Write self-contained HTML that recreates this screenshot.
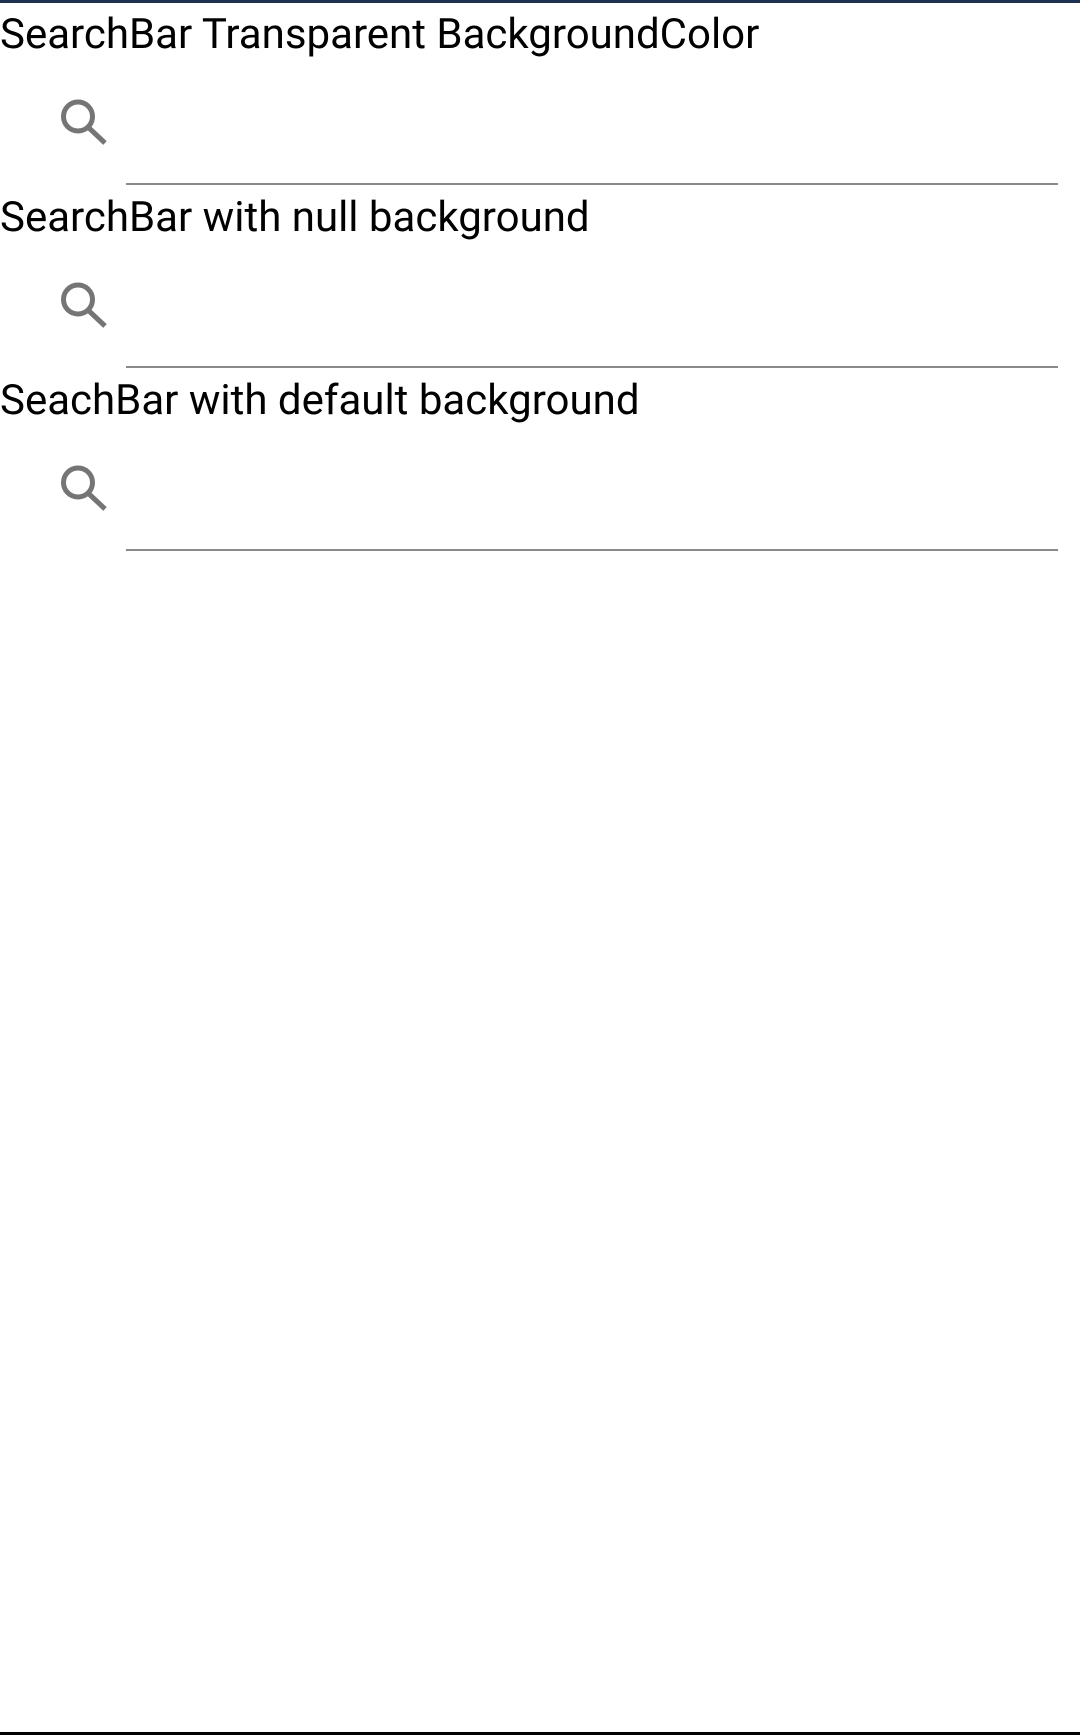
<!DOCTYPE html>
<html><head><style>
html,body{margin:0;padding:0;width:1080px;height:1735px;background:#fff;overflow:hidden;position:relative;font-family:"Roboto","Liberation Sans",sans-serif;}
.top{position:absolute;left:0;top:0;width:1080px;height:3px;background:#1d3250;}
.bot{position:absolute;left:0;top:1732px;width:1080px;height:3px;background:#000;}
.t{position:absolute;left:0;font-size:42px;color:#000;line-height:1;white-space:nowrap;}
.u{position:absolute;left:126px;width:932px;height:2px;background:#8a8a8a;}
svg{position:absolute;left:0;}
</style></head><body>
<div class="top"></div>
<div class="t" style="top:14px">SearchBar Transparent BackgroundColor</div>
<svg style="top:0" width="140" height="183"><circle cx="78" cy="116.5" r="14.5" fill="none" stroke="#757575" stroke-width="5"/><line x1="88" y1="127" x2="105" y2="143" stroke="#757575" stroke-width="5"/></svg>
<div class="u" style="top:183px"></div>
<div class="t" style="top:197px">SearchBar with null background</div>
<svg style="top:183px" width="140" height="183"><circle cx="78" cy="116.5" r="14.5" fill="none" stroke="#757575" stroke-width="5"/><line x1="88" y1="127" x2="105" y2="143" stroke="#757575" stroke-width="5"/></svg>
<div class="u" style="top:366px"></div>
<div class="t" style="top:380px">SeachBar with default background</div>
<svg style="top:366px" width="140" height="183"><circle cx="78" cy="116.5" r="14.5" fill="none" stroke="#757575" stroke-width="5"/><line x1="88" y1="127" x2="105" y2="143" stroke="#757575" stroke-width="5"/></svg>
<div class="u" style="top:549px"></div>
<div class="bot"></div>
</body></html>
